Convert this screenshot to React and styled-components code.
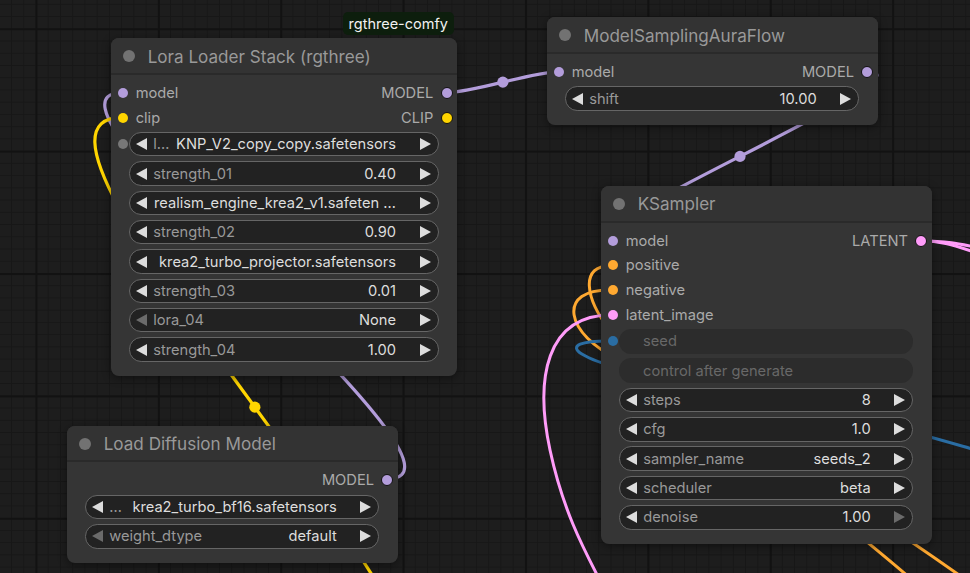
import React from 'react'
import styled, { createGlobalStyle } from 'styled-components'

// canvas zoom is ~1.222, so litegraph sizes (20px rows, 30px title) are scaled
const ROW = 24.44
const SLOT_ROW = 24.7

const GlobalStyle = createGlobalStyle`
  html, body {
    margin: 0;
    padding: 0;
    background: #1c1c1c;
    overflow: hidden;
  }
  body {
    font-family: Inter, "Liberation Sans", sans-serif;
  }
`

const Canvas = styled.div`
  position: relative;
  width: 970px;
  height: 573px;
  overflow: hidden;
  background-color: #1d1d1d;
  background-image:
    linear-gradient(to right, #121212 2px, transparent 2px),
    linear-gradient(to bottom, #121212 2px, transparent 2px),
    linear-gradient(to right, #171717 1px, transparent 1px),
    linear-gradient(to bottom, #171717 1px, transparent 1px);
  background-size: 122.4px 122.4px, 122.4px 122.4px, 12.24px 12.24px, 12.24px 12.24px;
  background-position: 35.5px 28.3px;
`

const Wires = styled.svg`
  position: absolute;
  left: 0;
  top: 0;
  width: 970px;
  height: 573px;
  pointer-events: none;
`

const NodeBox = styled.div`
  position: absolute;
  left: ${p => p.$x}px;
  top: ${p => p.$y}px;
  width: ${p => p.$w}px;
  display: flex;
  flex-direction: column;
  background: #353535;
  border-radius: 8px;
  box-shadow: 0 2px 10px rgba(0, 0, 0, 0.45);
`

const Title = styled.div`
  box-sizing: border-box;
  height: 36.7px;
  display: flex;
  align-items: center;
  gap: 13px;
  padding: 1px 0 0 12px;
  background: #333;
  border-radius: 8px 8px 0 0;
  border-bottom: 2px solid #2a2a2a;
  color: #999;
  font-size: 17.1px;
  white-space: nowrap;
`

const TitleDot = styled.span`
  width: 12px;
  height: 12px;
  border-radius: 50%;
  background: #727272;
  flex-shrink: 0;
`

const Badge = styled.div`
  position: absolute;
  right: 3px;
  top: -26px;
  height: 23px;
  padding: 0 6px;
  display: flex;
  align-items: center;
  border-radius: 5px;
  background: #0d1e0d;
  color: #f2f2f2;
  font-size: 14.5px;
`

const Body = styled.div`
  display: flex;
  flex-direction: column;
  padding: 5.5px 0 14.4px;
`

const SlotRow = styled.div`
  height: ${SLOT_ROW}px;
  display: flex;
  align-items: center;
  justify-content: space-between;
  padding: 0 4.3px 0 7px;
  color: #aaa;
  font-size: 14.67px;
`

const Slot = styled.div`
  display: flex;
  align-items: center;
  gap: ${p => (p.$out ? '7.4px' : '8px')};
`

const Dot = styled.span`
  box-sizing: border-box;
  width: ${p => (p.$out ? 12 : 10)}px;
  height: ${p => (p.$out ? 12 : 10)}px;
  border-radius: 50%;
  background: ${p => p.$color};
  border: ${p => (p.$out ? '1.5px solid #111' : 'none')};
  flex-shrink: 0;
`

const WidgetList = styled.div`
  display: flex;
  flex-direction: column;
  gap: 4.9px;
  margin: 2.2px 18.4px 0;
`

const Widget = styled.div`
  position: relative;
  box-sizing: border-box;
  height: ${ROW}px;
  display: flex;
  align-items: center;
  padding: ${p => (p.$off ? '0 0 0 24px' : '0 7px 0 6.4px')};
  border-radius: 12.2px;
  background: ${p => (p.$off ? '#2c2c2c' : '#222')};
  border: ${p => (p.$off ? 'none' : '1px solid #666')};
  font-size: 14.67px;
  white-space: nowrap;
`

const WidgetSlot = styled.span`
  position: absolute;
  left: ${p => (p.$off ? '-11.4px' : '-12.4px')};
  top: 50%;
  width: 10px;
  height: 10px;
  margin-top: -5px;
  border-radius: 50%;
  background: ${p => p.$color};
`

const Arrow = styled.span`
  width: 0;
  height: 0;
  flex-shrink: 0;
  border-top: 6px solid transparent;
  border-bottom: 6px solid transparent;
  ${p =>
    p.$dir === 'left'
      ? `border-right: 11.7px solid ${p.$dim ? '#6b6b6b' : '#ddd'};`
      : `border-left: 11.7px solid ${p.$dim ? '#6b6b6b' : '#ddd'};`}
`

const Label = styled.span`
  flex: 1;
  margin-left: ${p => (p.$off ? 0 : '5.7px')};
  color: ${p => (p.$off ? '#686868' : '#999')};
  overflow: hidden;
`

const Value = styled.span`
  margin-right: 23.6px;
  color: #ddd;
`

const C = {
  MODEL: '#b39ddb',
  CLIP: '#ffd500',
  COND: '#ffa931',
  LATENT: '#ff9cf9',
  INT: '#2a6da3',
  NONE: '#777',
}

function Node({ x, y, w, title, badge, slots = [], widgets = [] }) {
  return (
    <NodeBox $x={x} $y={y} $w={w}>
      {badge && <Badge>{badge}</Badge>}
      <Title>
        <TitleDot />
        {title}
      </Title>
      <Body>
        {slots.map((s, i) => (
          <SlotRow key={i}>
            {s.in ? (
              <Slot>
                <Dot $color={C[s.in[1]]} />
                {s.in[0]}
              </Slot>
            ) : <span />}
            {s.out && (
              <Slot $out>
                {s.out[0]}
                <Dot $out $color={C[s.out[1]]} />
              </Slot>
            )}
          </SlotRow>
        ))}
        <WidgetList>
          {widgets.map((wd, i) => (
            <Widget key={i} $off={wd.off}>
              {wd.slot && <WidgetSlot $off={wd.off} $color={C[wd.slot]} />}
              {!wd.off && <Arrow $dir="left" $dim={wd.dimLeft} />}
              <Label $off={wd.off}>{wd.label}</Label>
              {!wd.off && <Value>{wd.value}</Value>}
              {!wd.off && <Arrow $dir="right" $dim={wd.dimRight} />}
            </Widget>
          ))}
        </WidgetList>
      </Body>
    </NodeBox>
  )
}

// litegraph spline: control points pushed out by a quarter of the distance
const spline = (a, b) => {
  const d = Math.hypot(b[0] - a[0], b[1] - a[1]) * 0.25
  return `M${a[0]},${a[1]} C${a[0] + d},${a[1]} ${b[0] - d},${b[1]} ${b[0]},${b[1]}`
}

const links = [
  { from: [446.7, 92.5], to: [559, 71.8], color: C.MODEL },
  { from: [867.3, 71.8], to: [612.7, 241], color: C.MODEL },
  { from: [386.7, 479], to: [122.7, 92.5], color: C.MODEL },
  { from: [387, 697], to: [122.7, 117.3], color: C.CLIP },
]

// links whose other end is off screen
const loose = [
  { d: 'M612.7,265.7 C578,264 586,300 610,330 S844,518 926,592', color: C.COND },
  { d: 'M612.7,290 C555,288 565,335 620,360 S884,520 994,600', color: C.COND },
  { d: 'M612.7,315 C545,314 535,380 550,450 S590,560 610,600', color: C.LATENT },
  { d: 'M612.7,341 C548,340 566,362 700,385 S905,430 990,454', color: C.INT },
  { d: 'M920.7,240.7 C945,241 955,243 990,250', color: C.LATENT },
  { d: 'M920.7,240.7 C945,241 955,246 990,257', color: C.LATENT },
]

export default function App() {
  return (
    <>
      <GlobalStyle />
      <Canvas>
        <Wires viewBox="0 0 970 573">
          {loose.map((l, i) => (
            <path key={'l' + i} d={l.d} stroke={l.color} strokeWidth="3" fill="none" />
          ))}
          {links.map((l, i) => (
            <g key={i}>
              <path d={spline(l.from, l.to)} stroke={l.color} strokeWidth="3.2" fill="none" />
              <circle
                cx={(l.from[0] + l.to[0]) / 2}
                cy={(l.from[1] + l.to[1]) / 2}
                r="5.6"
                fill={l.color}
              />
            </g>
          ))}
        </Wires>

        <Node
          x={110.7}
          y={38.3}
          w={346.3}
          title="Lora Loader Stack (rgthree)"
          badge="rgthree-comfy"
          slots={[
            { in: ['model', 'MODEL'], out: ['MODEL', 'MODEL'] },
            { in: ['clip', 'CLIP'], out: ['CLIP', 'CLIP'] },
          ]}
          widgets={[
            { label: 'l…', value: 'KNP_V2_copy_copy.safetensors', slot: 'NONE' },
            { label: 'strength_01', value: '0.40' },
            { label: '', value: 'realism_engine_krea2_v1.safeten …' },
            { label: 'strength_02', value: '0.90' },
            { label: '', value: 'krea2_turbo_projector.safetensors' },
            { label: 'strength_03', value: '0.01' },
            { label: 'lora_04', value: 'None', dimLeft: true },
            { label: 'strength_04', value: '1.00' },
          ]}
        />

        <Node
          x={546.7}
          y={17.3}
          w={331}
          title="ModelSamplingAuraFlow"
          slots={[{ in: ['model', 'MODEL'], out: ['MODEL', 'MODEL'] }]}
          widgets={[{ label: 'shift', value: '10.00' }]}
        />

        <Node
          x={600.7}
          y={186}
          w={331}
          title="KSampler"
          slots={[
            { in: ['model', 'MODEL'], out: ['LATENT', 'LATENT'] },
            { in: ['positive', 'COND'] },
            { in: ['negative', 'COND'] },
            { in: ['latent_image', 'LATENT'] },
          ]}
          widgets={[
            { label: 'seed', off: true, slot: 'INT' },
            { label: 'control after generate', off: true },
            { label: 'steps', value: '8' },
            { label: 'cfg', value: '1.0' },
            { label: 'sampler_name', value: 'seeds_2' },
            { label: 'scheduler', value: 'beta' },
            { label: 'denoise', value: '1.00', dimRight: true },
          ]}
        />

        <Node
          x={66.7}
          y={425.7}
          w={331}
          title="Load Diffusion Model"
          slots={[{ out: ['MODEL', 'MODEL'] }]}
          widgets={[
            { label: '…', value: 'krea2_turbo_bf16.safetensors' },
            { label: 'weight_dtype', value: 'default', dimLeft: true },
          ]}
        />
      </Canvas>
    </>
  )
}
